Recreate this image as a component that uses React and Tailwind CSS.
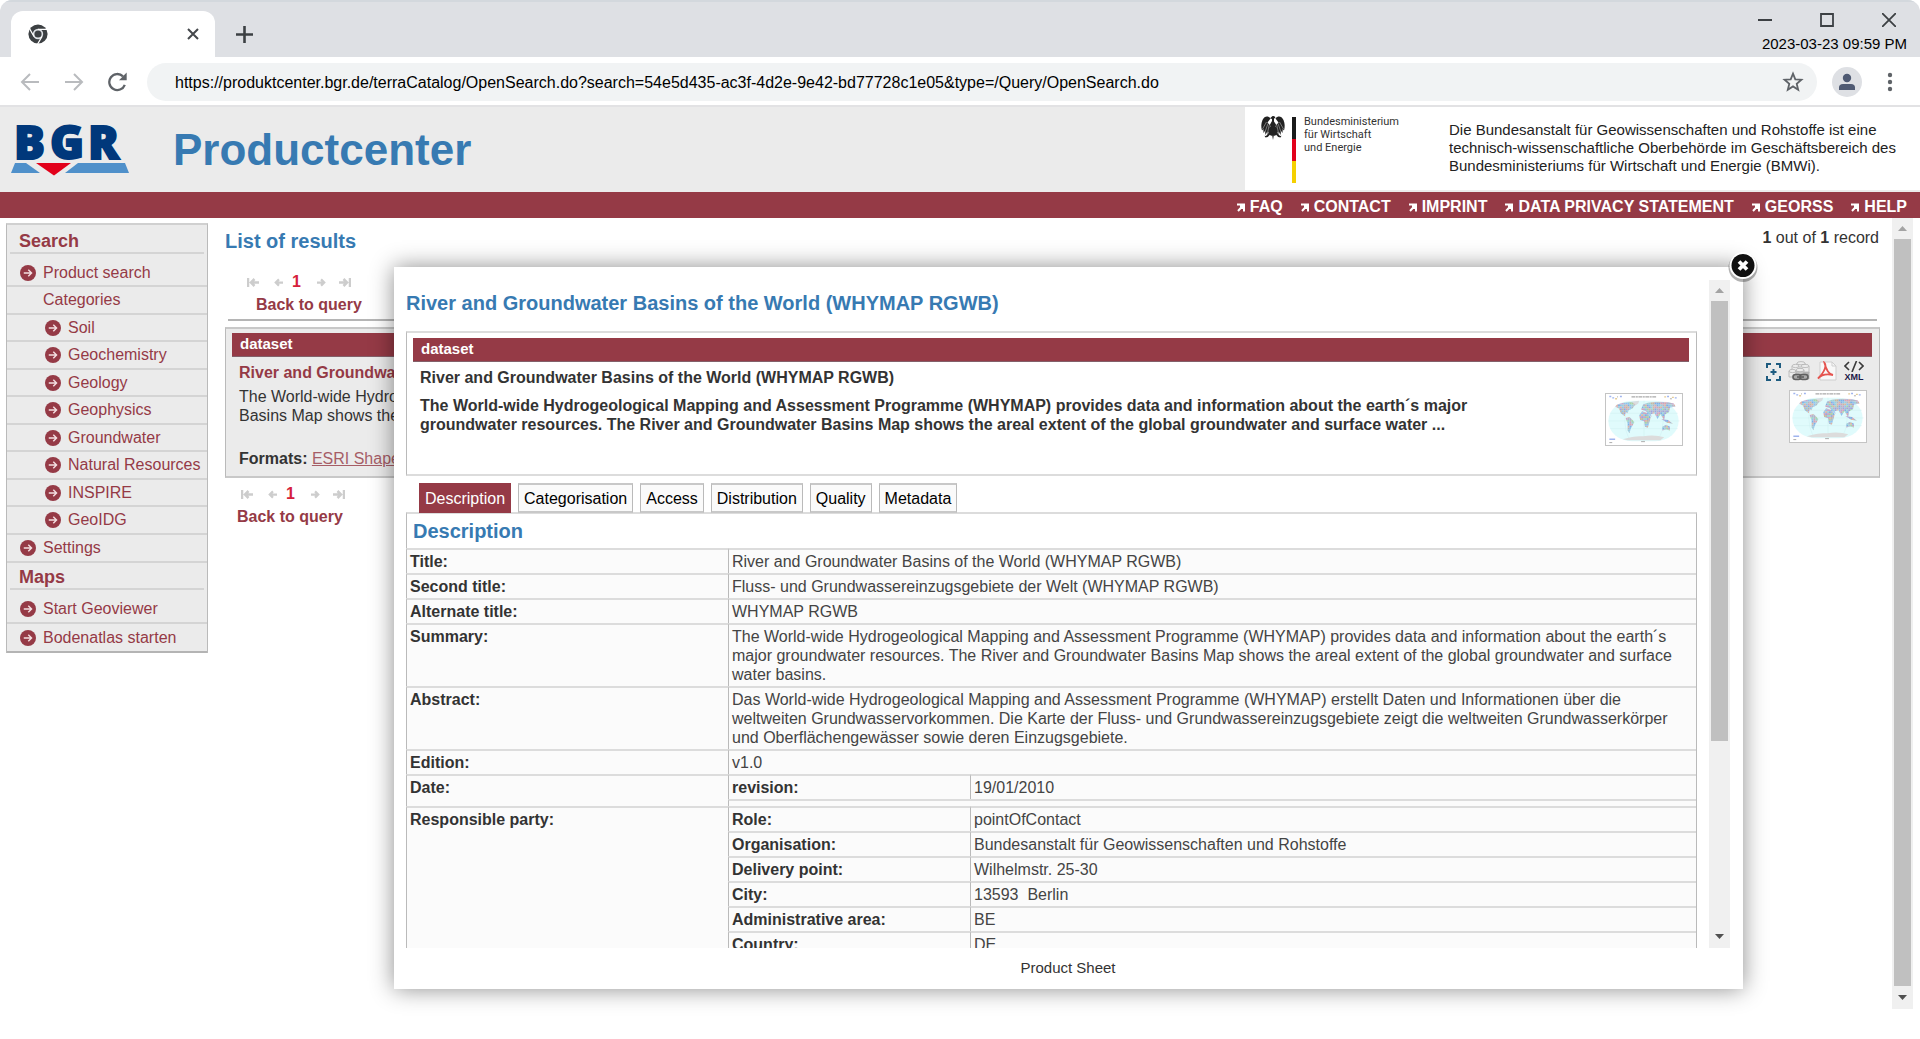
import React, { useId } from "react";

const Arrow = ({ flip, className }) => (
  <svg className={className} width="20" height="20" viewBox="0 0 20 20" fill="none" stroke="#b9bbbe" strokeWidth="2">
    <path d={flip ? "M1 10H18M10 2L18 10L10 18" : "M19 10H2M10 2L2 10L10 18"} />
  </svg>
);

function ChromeIcon() {
  return (
    <svg width="20" height="20" viewBox="0 0 20 20">
      <circle cx="10" cy="10" r="9.6" fill="#3c4043" />
      <circle cx="10" cy="10" r="5.2" fill="#dee1e6" />
      <circle cx="10" cy="10" r="3.6" fill="#3c4043" />
      <g stroke="#fff" strokeWidth="1.3">
        <path d="M10 5.3H19M6 12.5L1.6 4.8M14 12.5L9.6 20" />
      </g>
    </svg>
  );
}

function BrowserChrome() {
  return (
    <header>
      <div className="flex h-[57px] items-end border-t-2 border-[#d3d8dd] bg-[#dee0e4] pl-[11px]">
        <div className="flex h-[46px] w-[204px] items-center justify-between rounded-t-[12px] bg-white pl-[17px] pr-4">
          <ChromeIcon />
          <button aria-label="Close tab" className="p-0">
            <svg width="12" height="12" viewBox="0 0 12 12" stroke="#45484c" strokeWidth="2">
              <path d="M1 1L11 11M11 1L1 11" />
            </svg>
          </button>
        </div>
        <button aria-label="New tab" className="mb-[14px] ml-[21px]">
          <svg width="17" height="17" viewBox="0 0 17 17" stroke="#3c4043" strokeWidth="2.6">
            <path d="M8.500 0V17M0 8.500H17" />
          </svg>
        </button>
        <div className="ml-auto flex flex-col items-end self-start pr-[13px] pt-[11px]">
          <div className="flex items-center gap-12 pr-[11px]">
            <button aria-label="Minimise">
              <svg width="14" height="14" viewBox="0 0 14 14" stroke="#3c4043" strokeWidth="2"><path d="M0 7H14" /></svg>
            </button>
            <button aria-label="Maximise">
              <svg width="14" height="14" viewBox="0 0 14 14" fill="none" stroke="#3c4043" strokeWidth="1.800"><path d="M1 1H13V13H1Z" /></svg>
            </button>
            <button aria-label="Close window">
              <svg width="14" height="14" viewBox="0 0 14 14" stroke="#3c4043" strokeWidth="1.800"><path d="M0 0L14 14M14 0L0 14" /></svg>
            </button>
          </div>
          <time className="mt-[7px] text-[15px] leading-5 text-black">2023-03-23 09:59 PM</time>
        </div>
      </div>
      <div className="flex h-[50px] items-center border-b-2 border-[#e2e2e4] bg-white pl-[20px] pr-[27px] pt-[2px]">
        <button aria-label="Back"><Arrow /></button>
        <button aria-label="Forward" className="ml-6"><Arrow flip /></button>
        <button aria-label="Reload" className="ml-[24px]">
          <svg width="19" height="20" viewBox="0 0 19 20">
            <path d="M16.800 12.800A8 8 0 1 1 15 4.400" fill="none" stroke="#5f6368" strokeWidth="2.300" />
            <path d="M18.700 0.500V8.300H11Z" fill="#5f6368" />
          </svg>
        </button>
        <div className="ml-[20px] flex h-[38px] flex-1 items-center rounded-full bg-[#f1f3f4] pl-7 pr-3">
          <input
            aria-label="Address"
            readOnly
            className="flex-1 bg-transparent pt-px text-[16px] text-black outline-none"
            value="https://produktcenter.bgr.de/terraCatalog/OpenSearch.do?search=54e5d435-ac3f-4d2e-9e42-bd77728c1e05&type=/Query/OpenSearch.do"
          />
          <button aria-label="Bookmark">
            <svg width="24" height="24" viewBox="0 0 24 24" fill="none" stroke="#5f6368" strokeWidth="1.800">
              <path d="M12 3.600L14.300 9.300L20.400 9.700L15.700 13.700L17.200 19.700L12 16.400L6.800 19.700L8.300 13.700L3.600 9.700L9.700 9.300Z" />
            </svg>
          </button>
        </div>
        <button aria-label="Profile" className="ml-[15px]">
          <svg width="30" height="30" viewBox="0 0 30 30">
            <circle cx="15" cy="15" r="15" fill="#dee0e4" />
            <circle cx="15" cy="11" r="4.200" fill="#4f5a73" />
            <path d="M7 23V20.500Q7 17 11 17H19Q23 17 23 20.500V23Z" fill="#4f5a73" />
          </svg>
        </button>
        <button aria-label="Menu" className="ml-[25px]">
          <svg width="6" height="20" viewBox="0 0 6 20" fill="#5f6368">
            <circle cx="3" cy="3" r="2.200" /><circle cx="3" cy="10" r="2.200" /><circle cx="3" cy="17" r="2.200" />
          </svg>
        </button>
      </div>
    </header>
  );
}

function BgrLogo() {
  return (
    <svg width="118" height="72" viewBox="0 -17 118 72" role="img" aria-label="BGR">
      <g fill="#00387b" stroke="#00387b" strokeWidth="1.800" fontFamily="'Open Sans', sans-serif" fontWeight="800" fontSize="46">
        <text x="3" y="35">B</text>
        <text x="39" y="35">G</text>
        <text x="77" y="35">R</text>
      </g>
      <path d="M4 39H15L29 49H0Z" fill="#4f90ca" />
      <path d="M67 39H114L118 49H54Z" fill="#4f90ca" />
      <path d="M25 39H60L43 51.500Z" fill="#e2001a" />
    </svg>
  );
}

function Eagle() {
  return (
    <svg width="24" height="26" viewBox="0 0 24 26">
      <g fill="#222">
        <path d="M11 1.500C12.500 .6 14.200 1.300 14.300 3L13 3.500V6.500L15 9.500L14 16L15.500 18.500L13.800 18.500L14.500 21L12.800 20.500L12 25L11.200 20.500L9.500 21L10.200 18.500L8.500 18.500L10 16L9 9.500L11 6V4L9 3.300Z" />
        <path d="M9.500 3.500C7 .5 3.500 1 1.500 5C0 8.500 0 12 1 15.500L2.300 14L2.500 18L4 16L4.500 20L6 17L7 19.500L8.300 15L9.200 10.500L6.500 7.500Z" />
        <path d="M14.500 3.500C17 .5 20.500 1 22.500 5C24 8.500 24 12 23 15.500L21.700 14L21.500 18L20 16L19.500 20L18 17L17 19.500L15.700 15L14.800 10.500L17.500 7.500Z" />
        <path d="M7 15L9 12H15L17 15L15 20H9Z" />
        <path d="M8.500 17L5 21L3.500 20.800L4.500 22.500L6.800 22L10 18.500ZM15.500 17L19 21L20.500 20.800L19.500 22.500L17.200 22L14 18.500Z" />
      </g>
      <g stroke="#fff" strokeWidth=".4" fill="none">
        <path d="M1.500 14L5.500 7M4 17L7 8.500M6.500 18L8.200 10M22.500 14L18.500 7M20 17L17 8.500M17.500 18L15.800 10" />
      </g>
    </svg>
  );
}

const navLinks = ["FAQ", "CONTACT", "IMPRINT", "DATA PRIVACY STATEMENT", "GEORSS", "HELP"];

function SiteHeader() {
  return (
    <div>
      <div className="flex h-[85px] items-stretch bg-[#ebebeb]">
        <div className="flex flex-1 items-start pl-[11px]">
          <div><BgrLogo /></div>
          <h1 className="ml-[44px] mt-[17px] text-[44px] font-bold leading-[52px] text-[#377ab2]">Productcenter</h1>
        </div>
        <div className="mb-[2px] flex w-[675px] bg-white pl-4 pr-3">
          <div className="flex w-[188px] items-start pt-2">
            <Eagle />
            <div className="ml-[7px] mt-[2px] flex flex-col">
              <span className="h-[22px] w-1 bg-[#1a1a1a]" />
              <span className="h-[22px] w-1 bg-[#e2001a]" />
              <span className="h-[22px] w-1 bg-[#f5d000]" />
            </div>
            <p className="ml-2 font-['Roboto',sans-serif] text-[11px] leading-[13px] text-[#333]">
              Bundesministerium<br />für Wirtschaft<br />und Energie
            </p>
          </div>
          <p className="pt-[14px] text-[15px] leading-[18px] text-[#222]">
            Die Bundesanstalt für Geowissenschaften und Rohstoffe ist eine<br />
            technisch-wissenschaftliche Oberbehörde im Geschäftsbereich des<br />
            Bundesministeriums für Wirtschaft und Energie (BMWi).
          </p>
        </div>
      </div>
      <nav className="flex h-[26px] items-center justify-end gap-[18px] bg-[#953a46] pr-[13px]">
        {navLinks.map((t) => (
          <a key={t} href="#" className="flex items-center gap-[5px] pt-[4px] text-[16px] font-bold leading-5 text-white">
            <svg width="8" height="9" viewBox="0 0 8 9" fill="none" stroke="#fff" strokeWidth="2"><path d="M0 1.500H7V8.500M6.500 2L1 8M3 3H6V6" /></svg>
            {t}
          </a>
        ))}
      </nav>
    </div>
  );
}

function Bullet() {
  return (
    <svg width="16" height="16" viewBox="0 0 17 17" className="shrink-0">
      <circle cx="8.500" cy="8.500" r="8.500" fill="#953a46" />
      <path d="M4 8.500H12.200M8.800 5L12.300 8.500L8.800 12" fill="none" stroke="#f3dfe1" strokeWidth="1.500" />
    </svg>
  );
}

const SideLink = ({ children, indent }) => (
  <a href="#" className={"flex h-full items-center gap-[7px] text-[16px] leading-5 text-[#953a46] " + (indent ? "pl-[38px]" : "pl-[13px]")}>
    <Bullet />
    {children}
  </a>
);

const categories = ["Soil", "Geochemistry", "Geology", "Geophysics", "Groundwater", "Natural Resources", "INSPIRE", "GeoIDG"];

function Sidebar() {
  return (
    <aside className="ml-[6px] mt-[5px] w-[202px] shrink-0 self-start border-x border-t-2 border-x-[#bababa] border-t-[#d0d0d0] bg-[#ebebeb]">
      <h2 className="mx-[3px] h-[29px] border-b-2 border-[#d4d4d4] pl-[9px] pt-1 text-[18px] font-bold leading-6 text-[#953a46]">Search</h2>
      <ul>
        <li className="h-[33px] border-b-2 border-[#d4d4d4] pt-[6px]"><SideLink>Product search</SideLink></li>
        <li className="h-[28px] border-b-2 border-[#d4d4d4]">
          <div className="pl-9 pt-[3px] text-[16px] leading-5 text-[#953a46]">Categories</div>
        </li>
        {categories.map((c) => (
          <li key={c} className="h-[27px] border-b-2 border-[#d4d4d4] even:h-[28px]"><SideLink indent>{c}</SideLink></li>
        ))}
        <li className="h-[28px] border-b-2 border-[#d4d4d4]"><SideLink>Settings</SideLink></li>
      </ul>
      <h2 className="mx-[3px] h-[27px] border-b-2 border-[#d4d4d4] pl-[9px] pt-[2px] text-[18px] font-bold leading-6 text-[#953a46]">Maps</h2>
      <ul>
        <li className="h-[34px] border-b-2 border-[#d4d4d4] pt-[6px]"><SideLink>Start Geoviewer</SideLink></li>
        <li className="h-[29px] border-b-2 border-[#b4b4b4]"><SideLink>Bodenatlas starten</SideLink></li>
      </ul>
    </aside>
  );
}

function Pager() {
  return (
    <div className="flex h-5 items-center text-[16px] font-bold leading-5 text-[#d5203c]">
      <svg width="12" height="9" viewBox="0 0 12 9" fill="none" stroke="#cdcdcd" strokeWidth="2.500"><path d="M1 0V9M12 4.500H4M7.500 1L4 4.500L7.500 8" /></svg>
      <svg className="ml-[15px]" width="9" height="9" viewBox="0 0 10 9" fill="none" stroke="#cdcdcd" strokeWidth="2.500"><path d="M10 4.500H2M5.500 1L2 4.500L5.500 8" /></svg>
      <span className="ml-[9px]">1</span>
      <svg className="ml-[16px]" width="9" height="9" viewBox="0 0 10 9" fill="none" stroke="#cdcdcd" strokeWidth="2.500"><path d="M0 4.500H8M4.500 1L8 4.500L4.500 8" /></svg>
      <svg className="ml-[13px]" width="12" height="9" viewBox="0 0 12 9" fill="none" stroke="#cdcdcd" strokeWidth="2.500"><path d="M11 0V9M0 4.500H8M4.500 1L8 4.500L4.500 8" /></svg>
    </div>
  );
}

const palette = ["#c9a3c6", "#8fc3ee", "#a9d3a4", "#e0b3a3", "#a3a3dc", "#9fd0d6", "#c4b7a0", "#7fb0e6", "#d7a3b4", "#b0b7c9"];

const basins = [];
for (let y = 7; y < 42; y += 2) {
  for (let x = 8; x < 74; x += 2) {
    basins.push([x, y, palette[(x * 7 + y * 13 + ((x * y) % 11)) % palette.length]]);
  }
}

const land = [
  "M11 11L18 9L26 8L30 11L27 15L23 17L22 20L20 19L19 23L15 20L13 15L9 13Z",
  "M20 25L24 24L29 29L27 33L25 36L24 41L22 38L22 31Z",
  "M36 16L38 11L43 9L52 8L62 8L70 10L72 13L66 14L65 19L61 21L60 27L56 21L53 26L50 20L46 21L47 24L41 18Z",
  "M34 22L37 18L43 20L46 24L45 28L43 35L40 34L39 28L35 27Z",
  "M58 34L62 32L66 34L66 38L62 37L58 38Z",
  "M57 26L64 27L69 31L63 30Z",
];

function WorldMap() {
  const id = useId();
  return (
    <svg width="78" height="53" viewBox="0 0 78 53" role="img" aria-label="World map" className="border border-[#c4c4c4] bg-white">
      <clipPath id={id}>
        {land.map((d) => <path key={d} d={d} />)}
      </clipPath>
      <rect x="2" y="7" width="73" height="42" rx="24" fill="#e0fbfc" />
      <g fill="none" stroke="#cdeff0" strokeWidth=".5">
        <path d="M4 20H74M2 28H76M4 36H74M39 7V49M24 8Q14 28 24 48M54 8Q64 28 54 48" />
      </g>
      <path d="M26 8L34 7L33 10L30 12L28 10Z" fill="#d9dde0" />
      <g clipPath={"url(#" + id + ")"}>
        {basins.map(([x, y, c]) => (
          <rect key={x + "-" + y} x={x} y={y} width="2" height="2" fill={c} />
        ))}
      </g>
      <path d="M17 47Q30 43 38 44Q50 42 60 45L56 48H22Z" fill="#dcdcdc" />
      <path d="M26 3H52" stroke="#a9a9a9" strokeWidth="1.500" strokeDasharray="4 .6 2 .6" />
      <path d="M3 2.500H5M6 4H8M14 2.500H16M63 2.500H65M71 4H73M3 47H9" stroke="#9fb4ee" strokeWidth="1.500" />
      <path d="M9 5H11M60 3H62M68 3.500H70" stroke="#e4cc96" strokeWidth="1.500" />
      <path d="M11 3H12M66 5H68M3 50.500H6M36 49.500H40" stroke="#aaa" strokeWidth="1" />
    </svg>
  );
}

function RecordActions() {
  return (
    <div className="flex items-start gap-[7px]">
      <button aria-label="Zoom to extent" className="mt-[2px]">
        <svg width="15" height="18" viewBox="0 0 15 18" fill="none" stroke="#1f5c80" strokeWidth="2">
          <path d="M1 5V1H5M10 1H14V5M14 13V17H10M5 17H1V13M7.500 6V12M4.500 9H10.500" />
        </svg>
      </button>
      <button aria-label="Linked services">
        <svg width="22" height="21" viewBox="0 0 22 21">
          <g fill="#ececec" stroke="#b2b2b2" strokeWidth=".8">
            <path d="M9 2V8H17V2" /><ellipse cx="13" cy="2.200" rx="4" ry="1.600" />
            <path d="M4 5V11H11V5" /><ellipse cx="7.500" cy="5" rx="3.500" ry="1.600" />
            <path d="M13 5V12H21V5" /><ellipse cx="17" cy="5" rx="4" ry="1.600" />
            <path d="M1 10V16H8V10" /><ellipse cx="4.500" cy="10" rx="3.500" ry="1.600" />
            <path d="M8 9V17H16V9" fill="#c4c4c4" /><ellipse cx="12" cy="9" rx="4" ry="1.700" />
            <path d="M16 11H21V18H14Z" fill="#b4b4b4" />
          </g>
          <rect x="5" y="13.500" width="8" height="5" rx="2.500" fill="#aaa" stroke="#606060" strokeWidth="1.600" />
          <rect x="12" y="13.500" width="8" height="5" rx="2.500" fill="#aaa" stroke="#606060" strokeWidth="1.600" />
          <path d="M9 16H16" stroke="#606060" strokeWidth="1.600" />
        </svg>
      </button>
      <button aria-label="PDF">
        <svg width="20" height="20" viewBox="0 0 20 20">
          <path d="M3 1H15L19 5V19H3Z" fill="#f8f8f8" stroke="#cfcfcf" />
          <path d="M15 1V5H19" fill="none" stroke="#cfcfcf" />
          <path d="M7.500 2C9.500 4 8.500 10 1 17.500C4 14 9 12.500 16 14C12 13.500 9 8 7.500 2Z" fill="none" stroke="#e5544f" strokeWidth="1.800" />
        </svg>
      </button>
      <button aria-label="XML" className="flex w-[20px] flex-col items-center">
        <svg width="20" height="11" viewBox="0 0 20 11" fill="none" stroke="#3a3a3a" strokeWidth="1.600"><path d="M5 1L1 5L5 9M15 1L19 5L15 9M12.500 0L8 11" /></svg>
        <span className="text-[9px] font-bold leading-[11px] text-[#1b1646]">XML</span>
      </button>
    </div>
  );
}

function Scrollbar({ thumb }) {
  return (
    <div className="flex w-[21px] shrink-0 flex-col items-center bg-[#f0f0f0]">
      <svg className="my-[8px]" width="9" height="5" viewBox="0 0 9 5"><path d="M0 5L4.500 0L9 5Z" fill="#a3a3a3" /></svg>
      <div className="flex w-[17px] flex-1 flex-col">{thumb}</div>
      <svg className="my-[9px]" width="9" height="5" viewBox="0 0 9 5"><path d="M0 0L4.500 5L9 0Z" fill="#505050" /></svg>
    </div>
  );
}

function Results() {
  return (
    <main className="mr-[12px] min-w-0 flex-1 pl-[17px] text-[16px] text-[#333]">
      <div className="flex items-start justify-between">
        <h2 className="mt-[11px] text-[20px] font-bold leading-6 text-[#377ab2]">List of results</h2>
        <p className="mr-px mt-[10px] leading-5"><b>1</b> out of <b>1</b> record</p>
      </div>
      <div className="mt-[19px] pl-[22px]"><Pager /></div>
      <a href="#" className="mt-[3px] ml-[31px] block leading-5 font-bold text-[#953a46]">Back to query</a>
      <hr className="ml-[3px] mr-[3px] mt-[4px] border-0 border-t-2 border-[#b5b5b5]" />
      <article className="mt-[6px] flex h-[151px] flex-col border-x border-y-2 border-x-[#bababa] border-y-[#c8c8c8] bg-[#ebebeb] pl-[6px] pr-[7px] pt-[4px]">
        <h3 className="h-[24px] border-b border-[#83606a] bg-[#953a46] pl-2 text-[15px] font-bold leading-[22px] text-white">dataset</h3>
        <div className="flex justify-between">
          <div className="pl-[7px] pt-[4px]">
            <a href="#" className="font-bold leading-5 text-[#953a46]">River and Groundwater Basins of the World (WHYMAP RGWB)</a>
            <p className="mt-[2px] max-w-[1180px] leading-[19px]">
              The World-wide Hydrogeological Mapping and Assessment Programme (WHYMAP) provides data and information about the<br />
              Basins Map shows the areal extent of the global groundwater and surface water ...
            </p>
            <p className="mt-6 leading-[19px]"><b>Formats:</b> <a href="#" className="text-[#953a46] underline opacity-80">ESRI Shapefile</a></p>
          </div>
          <div className="mr-[5px] flex flex-col items-end pt-1">
            <div className="mr-[3px]"><RecordActions /></div>
            <div className="mt-[7px]"><WorldMap /></div>
          </div>
        </div>
      </article>
      <div className="mt-[6px] pl-[16px]"><Pager /></div>
      <a href="#" className="mt-[3px] ml-[12px] block leading-5 font-bold text-[#953a46]">Back to query</a>
    </main>
  );
}

const tabs = ["Description", "Categorisation", "Access", "Distribution", "Quality", "Metadata"];

const general = [
  ["Title:", "River and Groundwater Basins of the World (WHYMAP RGWB)"],
  ["Second title:", "Fluss- und Grundwassereinzugsgebiete der Welt (WHYMAP RGWB)"],
  ["Alternate title:", "WHYMAP RGWB"],
  ["Summary:", "The World-wide Hydrogeological Mapping and Assessment Programme (WHYMAP) provides data and information about the earth´s major groundwater resources. The River and Groundwater Basins Map shows the areal extent of the global groundwater and surface water basins."],
  ["Abstract:", "Das World-wide Hydrogeological Mapping and Assessment Programme (WHYMAP) erstellt Daten und Informationen über die weltweiten Grundwasservorkommen. Die Karte der Fluss- und Grundwassereinzugsgebiete zeigt die weltweiten Grundwasserkörper und Oberflächengewässer sowie deren Einzugsgebiete."],
  ["Edition:", "v1.0"],
];

const party = [
  ["Role:", "pointOfContact"],
  ["Organisation:", "Bundesanstalt für Geowissenschaften und Rohstoffe"],
  ["Delivery point:", "Wilhelmstr. 25-30"],
  ["City:", "13593\u00a0 Berlin"],
  ["Administrative area:", "BE"],
  ["Country:", "DE"],
];

const Th = (props) => <th scope="row" className="border-t-2 border-l border-t-[#dcdcdc] border-l-[#bababa] px-[3px] py-[2px] text-left align-top font-bold" {...props} />;
const Td = (props) => <td className="border-t-2 border-l border-t-[#dcdcdc] border-l-[#bababa] px-[3px] py-[2px] align-top text-[#444]" {...props} />;

function DetailTable() {
  return (
    <table className="w-full table-fixed border-separate border-spacing-0 border-r border-[#bababa] bg-[#fbfbfb] leading-[19px]">
      <colgroup>
        <col className="w-[322px]" />
        <col className="w-[242px]" />
        <col />
      </colgroup>
      <tbody>
        {general.map(([k, v]) => (
          <tr key={k}><Th>{k}</Th><Td colSpan={2}>{v}</Td></tr>
        ))}
        <tr><Th rowSpan={2}>Date:</Th><Th>revision:</Th><Td>19/01/2010</Td></tr>
        <tr><td colSpan={2} className="h-[7px] border-t-2 border-l border-t-[#dcdcdc] border-l-[#bababa] p-0" /></tr>
        {party.map(([k, v], i) => (
          <tr key={k}>
            {i === 0 && <Th rowSpan={party.length}>Responsible party:</Th>}
            <Th>{k}</Th>
            <Td>{v}</Td>
          </tr>
        ))}
      </tbody>
    </table>
  );
}

function ProductSheet() {
  return (
    <section role="dialog" aria-label="Product Sheet" className="absolute left-[394px] right-[170px] top-[49px] bg-white pl-3 pr-[13px] pt-[13px] text-[16px] text-[#333] shadow-[0_0_22px_rgba(0,0,0,0.45)]">
      <button aria-label="Close" className="absolute -right-[15px] -top-[16px]">
        <svg width="30" height="32" viewBox="0 0 30 32">
          <circle cx="15" cy="16.500" r="14.500" fill="#000" opacity=".3" />
          <circle cx="15" cy="14.500" r="13.500" fill="#fff" />
          <circle cx="15" cy="14.500" r="11.500" fill="#111" />
          <path d="M11 10.500L19 18.500M19 10.500L11 18.500" stroke="#fff" strokeWidth="3.800" />
        </svg>
      </button>
      <div className="flex h-[668px] overflow-hidden">
        <div className="mr-3 min-w-0 flex-1">
          <h2 className="pt-[11px] text-[20px] font-bold leading-6 text-[#377ab2]">River and Groundwater Basins of the World (WHYMAP RGWB)</h2>
          <div className="mt-[16px] h-[145px] border-x border-y-2 border-x-[#bababa] border-y-[#dcdcdc] pl-[6px] pr-[7px] pt-[5px]">
            <h3 className="h-[24px] border-b border-[#83606a] bg-[#953a46] pl-2 text-[15px] font-bold leading-[22px] text-white">dataset</h3>
            <div className="flex justify-between font-bold">
              <div className="pl-[7px] pt-[6px]">
                <p className="leading-5">River and Groundwater Basins of the World (WHYMAP RGWB)</p>
                <p className="mt-2 max-w-[1100px] leading-[19px]">
                  The World-wide Hydrogeological Mapping and Assessment Programme (WHYMAP) provides data and information about the earth´s major groundwater resources. The River and Groundwater Basins Map shows the areal extent of the global groundwater and surface water ...
                </p>
              </div>
              <div className="mr-[6px] mt-[31px]"><WorldMap /></div>
            </div>
          </div>
          <div role="tablist" className="flex h-[36px] items-end gap-[7px] pl-[13px]">
            {tabs.map((t, i) => (
              <button
                key={t}
                role="tab"
                aria-selected={i === 0}
                className={"relative -mb-px h-[30px] border-x border-y-2 px-[5px] pt-px leading-6 " + (i === 0 ? "border-[#953a46] bg-[#953a46] text-white" : "border-x-[#bababa] border-y-[#c8c8c8] bg-[#fafafa] text-black")}
              >
                {t}
              </button>
            ))}
          </div>
          <h3 className="h-[36px] border-x border-t-2 border-x-[#bababa] border-t-[#dcdcdc] pl-[6px] text-[20px] font-bold leading-[34px] text-[#377ab2]">Description</h3>
          <DetailTable />
        </div>
        <Scrollbar thumb={<div className="h-[440px] bg-[#c0c0c0]" />} />
      </div>
      <p className="pb-[11px] pt-[10px] text-center text-[15px] leading-5">Product Sheet</p>
    </section>
  );
}

export default function App() {
  return (
    <div className="flex min-h-screen flex-col overflow-hidden rounded-t-[12px] bg-white font-['Liberation_Sans',Arial,sans-serif]">
      <BrowserChrome />
      <SiteHeader />
      <div className="relative mb-[30px] mr-[7px] flex flex-1">
        <Sidebar />
        <Results />
        <Scrollbar thumb={<div className="flex-1 bg-[#c0c0c0]" />} />
        <ProductSheet />
      </div>
    </div>
  );
}
